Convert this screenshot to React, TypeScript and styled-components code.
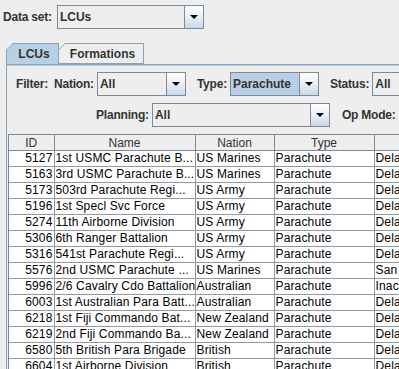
import React from 'react';
import styled, { createGlobalStyle } from 'styled-components';

const GlobalStyle = createGlobalStyle`
  html, body {
    margin: 0;
    padding: 0;
    background: #eeeeee;
    overflow: hidden;
  }
  body {
    font-family: "Liberation Sans", Arial, sans-serif;
    font-size: 12px;
    color: #333333;
  }
`;

const Frame = styled.div`
  width: 399px;
  height: 369px;
  overflow: hidden;
  background: #eeeeee;
`;

const TopBar = styled.div`
  display: flex;
  align-items: center;
  gap: 5px;
  padding: 5px 0 0 3px;
`;

const Label = styled.span<{ $pad?: number }>`
  font-weight: bold;
  color: #333333;
  white-space: nowrap;
  letter-spacing: -0.2px;
  margin-left: ${(p) => p.$pad ?? 0}px;
`;

const ComboBox = styled.div<{ $w: number; $selected?: boolean }>`
  display: flex;
  flex: none;
  width: ${(p) => p.$w}px;
  height: 24px;
  box-sizing: border-box;
  border: 1px solid #7a8a99;
  background: ${(p) => (p.$selected ? '#b8cfe5' : '#eeeeee')};
`;

const ComboText = styled.span`
  flex: 1;
  display: flex;
  align-items: center;
  padding-left: 2px;
  font-weight: bold;
  color: #333333;
  overflow: hidden;
  white-space: nowrap;
`;

const ArrowButton = styled.span`
  width: 18px;
  flex: none;
  display: flex;
  align-items: center;
  justify-content: center;
  border-left: 1px solid #7a8a99;
  background: linear-gradient(to bottom, #ffffff 0%, #eef3f8 40%, #c8d8e8 100%);
`;

const Arrow = () => (
  <svg width="8" height="5" viewBox="0 0 8 5">
    <polygon points="0,0 8,0 4,4" fill="#000" />
  </svg>
);

const Combo: React.FC<{ w: number; text: string; selected?: boolean }> = ({ w, text, selected }) => (
  <ComboBox $w={w} $selected={selected}>
    <ComboText>{text}</ComboText>
    <ArrowButton>
      <Arrow />
    </ArrowButton>
  </ComboBox>
);

const TabArea = styled.div`
  margin-top: 14px;
  padding-left: 6px;
`;

const TabStrip = styled.div`
  display: flex;
  height: 21px;
`;

const TabOuter = styled.div<{ $w: number; $active?: boolean }>`
  width: ${(p) => p.$w}px;
  height: 21px;
  margin-right: ${(p) => (p.$active ? -1 : 0)}px;
  background: #8da2b5;
  clip-path: polygon(0 7px, 7px 0, 100% 0, 100% 100%, 0 100%);
  position: relative;
  z-index: ${(p) => (p.$active ? 2 : 1)};
`;

const TabInner = styled.div<{ $active?: boolean }>`
  position: absolute;
  inset: 1px 1px ${(p) => (p.$active ? 0 : 1)}px 1px;
  background: ${(p) => (p.$active ? '#b8cfe5' : '#eeeeee')};
  clip-path: polygon(0 6px, 6px 0, 100% 0, 100% 100%, 0 100%);
  display: flex;
  align-items: center;
  justify-content: center;
  padding-left: 3px;
  font-weight: bold;
  color: #333333;
`;

const Panel = styled.div`
  border-top: 1px solid #8da2b5;
  border-left: 1px solid #8da2b5;
  box-shadow: inset 0 1px 0 #b8cfe5;
  padding: 7px 0 0 1px;
`;

const FilterRow = styled.div<{ $indent: number }>`
  display: flex;
  align-items: center;
  gap: 3px;
  height: 24px;
  padding-left: ${(p) => p.$indent}px;
  margin-bottom: 7px;
`;

const TableWrap = styled.div`
  border-top: 1px solid #7a8a99;
  border-left: 1px solid #7a8a99;
  background: #ffffff;
`;

const Grid = styled.table`
  border-collapse: collapse;
  table-layout: fixed;
  width: 460px;
  font-size: 12px;
  color: #000000;
`;

const HeadCell = styled.th`
  height: 15px;
  padding: 0;
  font-weight: normal;
  color: #333333;
  text-align: center;
  background: #eeeeee;
  border-right: 1px solid #7a8a99;
  border-bottom: 1px solid #7a8a99;
  white-space: nowrap;
  overflow: hidden;
`;

const Cell = styled.td<{ $right?: boolean }>`
  height: 15px;
  padding: 0 1px;
  line-height: 15px;
  text-align: ${(p) => (p.$right ? 'right' : 'left')};
  border-right: 1px solid #8e9aa6;
  border-bottom: 1px solid #8e9aa6;
  white-space: nowrap;
  overflow: hidden;
  letter-spacing: 0.15px;
`;

const columns = [
  { title: 'ID', w: 45 },
  { title: 'Name', w: 141 },
  { title: 'Nation', w: 79 },
  { title: 'Type', w: 100 },
  { title: 'Status', w: 95 },
];

const rows: [string, string, string, string, string][] = [
  ['5127', '1st USMC Parachute B...', 'US Marines', 'Parachute', 'Delayed'],
  ['5163', '3rd USMC Parachute B...', 'US Marines', 'Parachute', 'Delayed'],
  ['5173', '503rd Parachute Regi...', 'US Army', 'Parachute', 'Delayed'],
  ['5196', '1st Specl Svc Force', 'US Army', 'Parachute', 'Delayed'],
  ['5274', '11th Airborne Division', 'US Army', 'Parachute', 'Delayed'],
  ['5306', '6th Ranger Battalion', 'US Army', 'Parachute', 'Delayed'],
  ['5316', '541st Parachute Regi...', 'US Army', 'Parachute', 'Delayed'],
  ['5576', '2nd USMC Parachute ...', 'US Marines', 'Parachute', 'San Diego'],
  ['5996', '2/6 Cavalry Cdo Battalion', 'Australian', 'Parachute', 'Inactive'],
  ['6003', '1st Australian Para Batt...', 'Australian', 'Parachute', 'Delayed'],
  ['6218', '1st Fiji Commando Bat...', 'New Zealand', 'Parachute', 'Delayed'],
  ['6219', '2nd Fiji Commando Ba...', 'New Zealand', 'Parachute', 'Delayed'],
  ['6580', '5th British Para Brigade', 'British', 'Parachute', 'Delayed'],
  ['6604', '1st Airborne Division', 'British', 'Parachute', 'Delayed'],
];

export default function App() {
  return (
    <Frame>
      <GlobalStyle />
      <TopBar>
        <Label>Data set:</Label>
        <Combo w={147} text="LCUs" />
      </TopBar>

      <TabArea>
        <TabStrip>
          <TabOuter $w={53} $active>
            <TabInner $active>LCUs</TabInner>
          </TabOuter>
          <TabOuter $w={86}>
            <TabInner>Formations</TabInner>
          </TabOuter>
        </TabStrip>

        <Panel>
          <FilterRow $indent={8}>
            <Label>Filter:</Label>
            <Label $pad={3}>Nation:</Label>
            <Combo w={89} text="All" />
            <Label $pad={8}>Type:</Label>
            <Combo w={89} text="Parachute" selected />
            <Label $pad={8}>Status:</Label>
            <Combo w={60} text="All" />
          </FilterRow>
          <FilterRow $indent={88}>
            <Label>Planning:</Label>
            <Combo w={178} text="All" />
            <Label $pad={9}>Op Mode:</Label>
            <Combo w={60} text="All" />
          </FilterRow>

          <TableWrap>
            <Grid>
              <colgroup>
                {columns.map((c) => (
                  <col key={c.title} style={{ width: c.w }} />
                ))}
              </colgroup>
              <thead>
                <tr>
                  {columns.map((c) => (
                    <HeadCell key={c.title}>{c.title}</HeadCell>
                  ))}
                </tr>
              </thead>
              <tbody>
                {rows.map((r) => (
                  <tr key={r[0]}>
                    <Cell $right>{r[0]}</Cell>
                    <Cell>{r[1]}</Cell>
                    <Cell>{r[2]}</Cell>
                    <Cell>{r[3]}</Cell>
                    <Cell>{r[4]}</Cell>
                  </tr>
                ))}
              </tbody>
            </Grid>
          </TableWrap>
        </Panel>
      </TabArea>
    </Frame>
  );
}
